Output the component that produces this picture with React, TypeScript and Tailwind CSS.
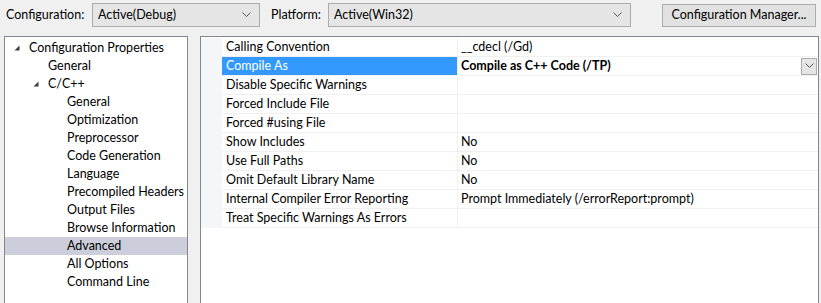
import React from "react";

const Chevron = () => (
  <svg width="9" height="6" viewBox="0 0 9 6" className="shrink-0">
    <path d="M0.5 0.5 L4.5 4.5 L8.5 0.5" fill="none" stroke="#555" strokeWidth="1" />
  </svg>
);

const Tri = () => (
  <svg width="6" height="6" viewBox="0 0 6 6" className="shrink-0">
    <path d="M5.5 0.5 L5.5 5.5 L0.5 5.5 Z" fill="#3c3c3c" />
  </svg>
);

const tree: { label: string; indent: number; expand?: boolean; selected?: boolean }[] = [
  { label: "Configuration Properties", indent: 0, expand: true },
  { label: "General", indent: 1 },
  { label: "C/C++", indent: 1, expand: true },
  { label: "General", indent: 2 },
  { label: "Optimization", indent: 2 },
  { label: "Preprocessor", indent: 2 },
  { label: "Code Generation", indent: 2 },
  { label: "Language", indent: 2 },
  { label: "Precompiled Headers", indent: 2 },
  { label: "Output Files", indent: 2 },
  { label: "Browse Information", indent: 2 },
  { label: "Advanced", indent: 2, selected: true },
  { label: "All Options", indent: 2 },
  { label: "Command Line", indent: 2 },
];

const props: { name: string; value: string; selected?: boolean }[] = [
  { name: "Calling Convention", value: "__cdecl (/Gd)" },
  { name: "Compile As", value: "Compile as C++ Code (/TP)", selected: true },
  { name: "Disable Specific Warnings", value: "" },
  { name: "Forced Include File", value: "" },
  { name: "Forced #using File", value: "" },
  { name: "Show Includes", value: "No" },
  { name: "Use Full Paths", value: "No" },
  { name: "Omit Default Library Name", value: "No" },
  { name: "Internal Compiler Error Reporting", value: "Prompt Immediately (/errorReport:prompt)" },
  { name: "Treat Specific Warnings As Errors", value: "" },
];

const indentClass = ["pl-[5px]", "pl-[24px]", "pl-[43px]"];

export default function App() {
  return (
    <div
      className="w-[821px] h-[303px] bg-[#f0f0f0] overflow-hidden text-[12.5px] text-black whitespace-nowrap"
      style={{ fontFamily: 'Lato, "Noto Sans", sans-serif' }}
    >
      {/* top bar */}
      <div className="flex items-center h-[30px]">
        <span className="ml-[6px] w-[86px]">Configuration:</span>
        <div className="w-[168px] h-[24px] bg-[#e5e5e5] border border-[#acacac] flex items-center justify-between pl-[5px] pr-[8px]">
          <span>Active(Debug)</span>
          <Chevron />
        </div>
        <span className="ml-[11px] w-[57px]">Platform:</span>
        <div className="w-[303px] h-[24px] bg-[#e5e5e5] border border-[#acacac] flex items-center justify-between pl-[5px] pr-[8px]">
          <span>Active(Win32)</span>
          <Chevron />
        </div>
        <div className="ml-[31px] w-[154px] h-[23px] bg-[#e1e1e1] border border-[#adadad] flex items-center justify-center">
          Configuration Manager...
        </div>
      </div>

      <div className="flex mt-[6px] h-[280px]">
        {/* tree */}
        <div className="ml-[4px] w-[184px] border-l border-t border-r border-[#828790] bg-white pt-[2px]">
          {tree.map((t, i) => (
            <div
              key={i}
              className={`h-[18px] flex items-center ${t.selected ? "bg-[#cccedb]" : ""} ${indentClass[t.indent]}`}
            >
              <span className="w-[19px] shrink-0 flex items-center pl-[4px]">
                {t.expand ? <Tri /> : null}
              </span>
              <span>{t.label}</span>
            </div>
          ))}
        </div>

        {/* property grid */}
        <div className="ml-[12px] w-[619px] border-l border-t border-r border-[#828790] bg-white">
          <div className="flex pt-[1px]">
            <div className="w-[21px] bg-[#f4f6f9]" />
            <div className="flex-1">
              {props.map((p, i) => (
                <div key={i} className="flex h-[19px] border-b border-[#f0f0f0]">
                  <div
                    className={`w-[236px] border-r border-[#f0f0f0] flex items-center pl-[4px] ${p.selected ? "bg-[#3399ff] text-white" : ""}`}
                  >
                    {p.name}
                  </div>
                  <div className={`flex-1 flex items-center pl-[3px] ${p.selected ? "font-bold" : ""}`}>
                    <span className="flex-1">{p.value}</span>
                    {p.selected ? (
                      <div className="w-[16px] h-[17px] bg-[#e5e5e5] border border-[#acacac] flex items-center justify-center mr-[1px]">
                        <Chevron />
                      </div>
                    ) : null}
                  </div>
                </div>
              ))}
            </div>
          </div>
        </div>
      </div>
    </div>
  );
}
